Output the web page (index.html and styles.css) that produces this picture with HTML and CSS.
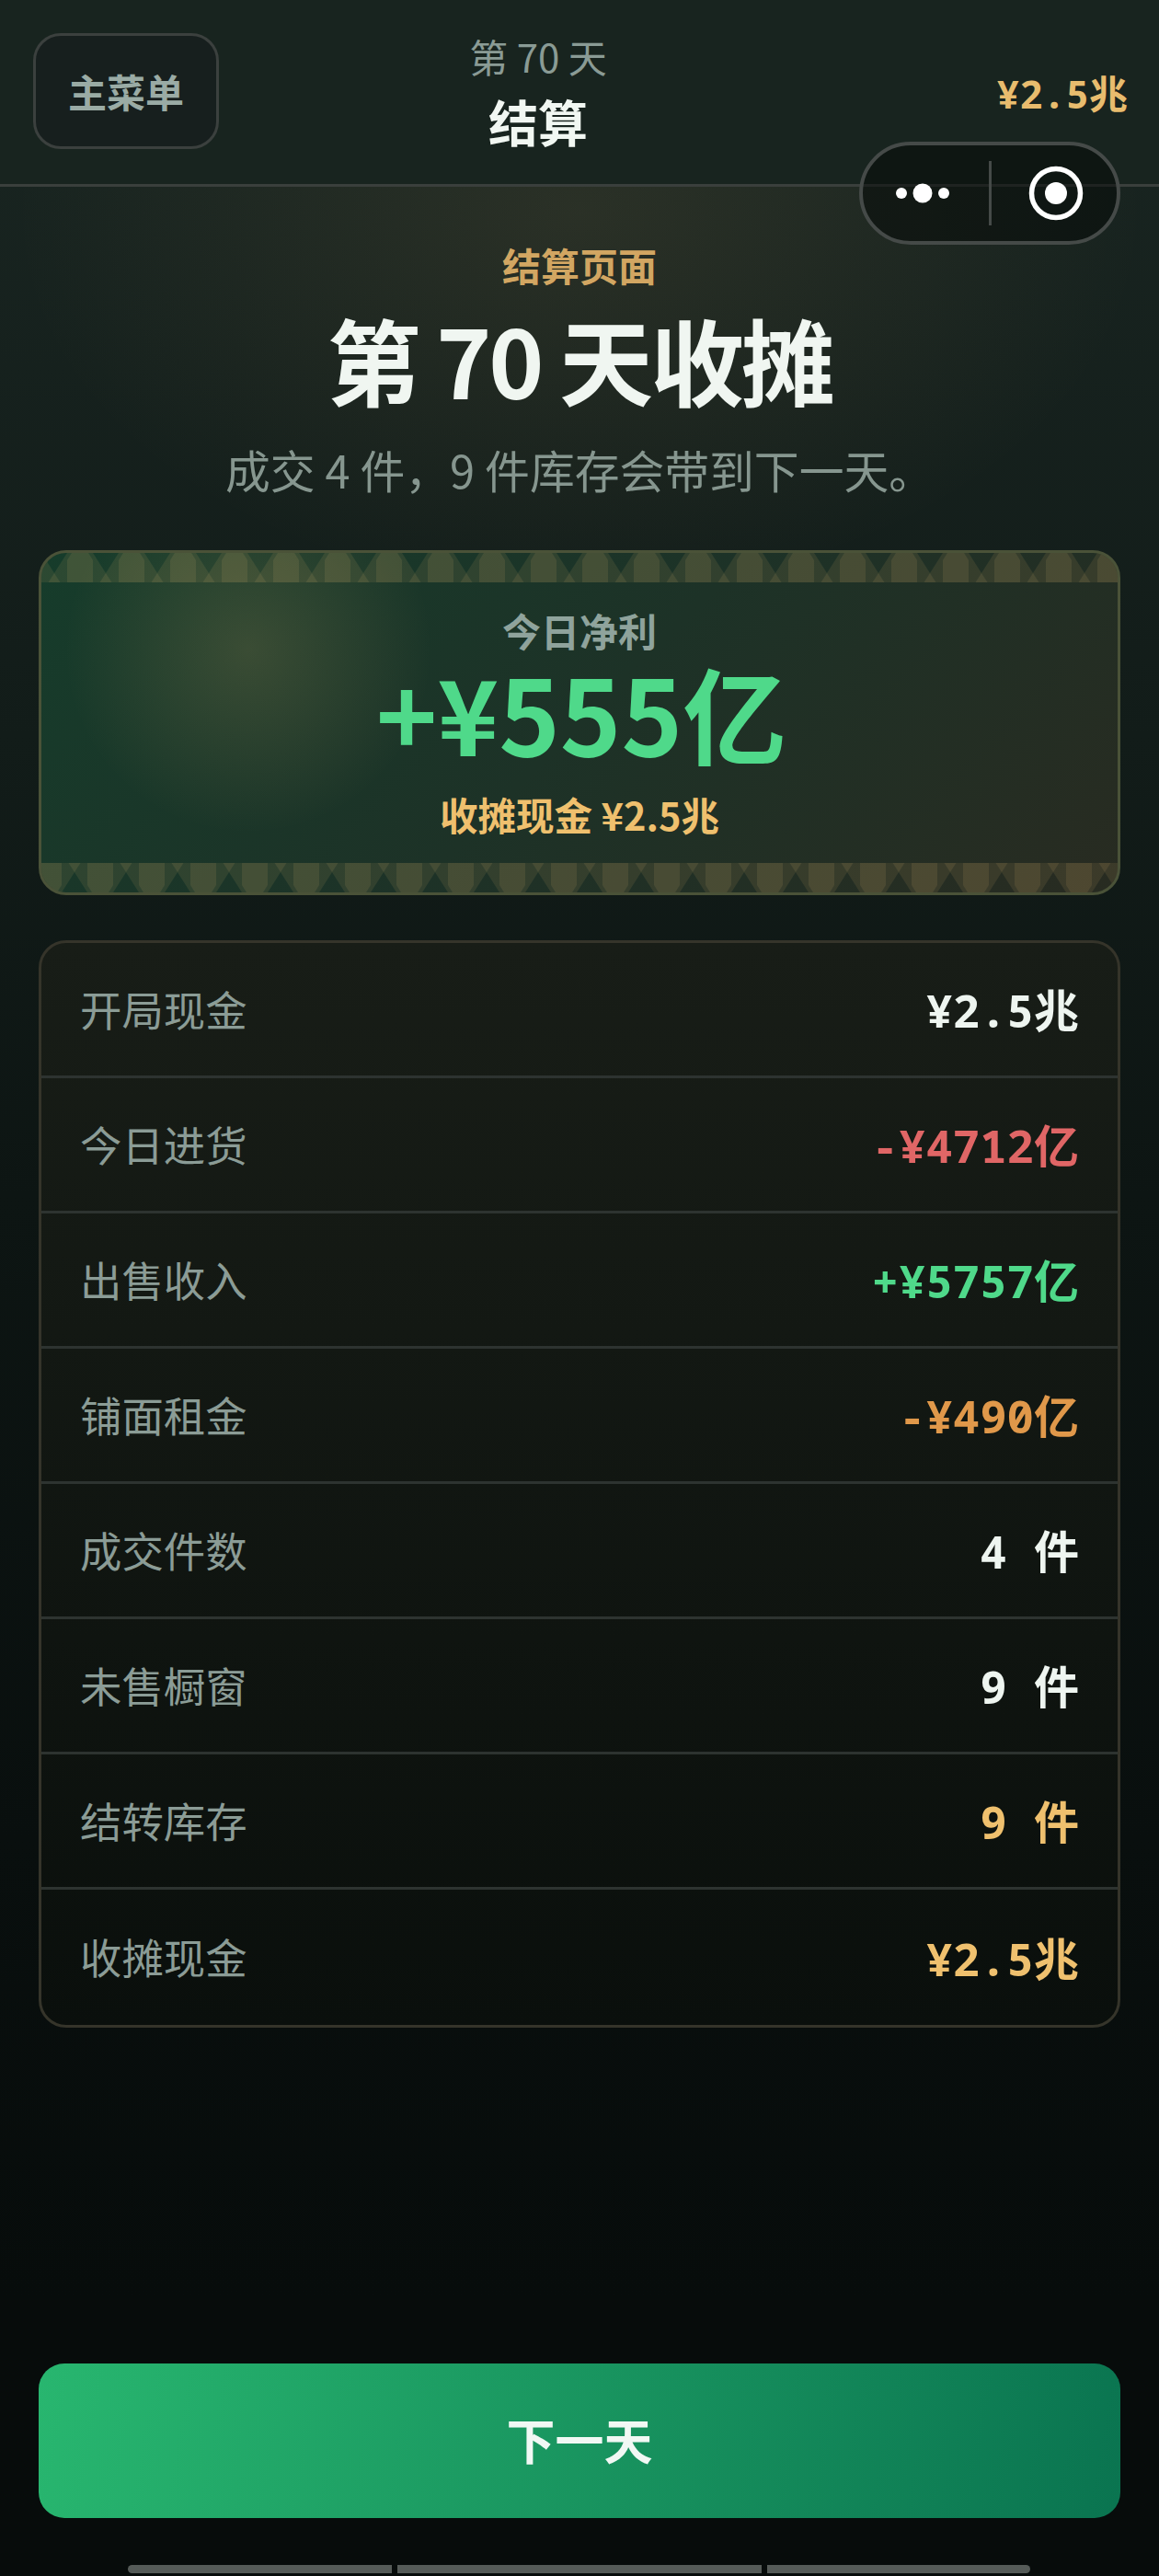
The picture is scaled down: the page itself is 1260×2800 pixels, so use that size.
FILE: index.html
```html
<!DOCTYPE html>
<html lang="zh-CN">
<head>
    <meta charset="utf-8">
    <meta name="viewport" content="width=device-width, initial-scale=1">
    <title>结算</title>
    <link rel="stylesheet" href="styles.css">
</head>
<body>
    <div class="page">
        <header class="nav">
            <div class="nav-left">
                <button class="menu-btn">主菜单</button>
            </div>
            <div class="nav-title">
                <div class="nav-day">第 70 天</div>
                <div class="nav-name">结算</div>
            </div>
            <div class="nav-cash mono">¥2.5兆</div>
            <div class="capsule">
                <svg class="capsule-more" width="62" height="24" viewBox="0 0 62 24">
                    <circle cx="8" cy="12" r="6" fill="#fff"/>
                    <circle cx="31" cy="12" r="10.5" fill="#fff"/>
                    <circle cx="54" cy="12" r="6" fill="#fff"/>
                </svg>
                <span class="capsule-line"></span>
                <svg class="capsule-close" width="60" height="60" viewBox="0 0 60 60">
                    <circle cx="30" cy="30" r="26.5" fill="none" stroke="#fff" stroke-width="5.5"/>
                    <circle cx="30" cy="30" r="12" fill="#fff"/>
                </svg>
            </div>
        </header>

        <main class="main">
            <div class="eyebrow">结算页面</div>
            <h1 class="title">第 70 天收摊</h1>
            <p class="subtitle">成交 4 件，9 件库存会带到下一天。</p>

            <section class="profit-card">
                <svg class="band" width="1170" height="32">
                    <defs>
                        <pattern id="bandTile" patternUnits="userSpaceOnUse" width="56" height="32">
                            <!-- the x cell: top triangle stays open -->
                            <polygon points="0,0 14,22 7.6,32 0,32" class="tile-mid"/>
                            <polygon points="28,0 14,22 20.4,32 28,32" class="tile-mid"/>
                            <polygon points="14,22 20.4,32 7.6,32" class="tile-gold"/>
                            <!-- the column with cut corners -->
                            <polygon points="28,0 33,0 28,8" class="tile-mid"/>
                            <polygon points="56,0 51,0 56,8" class="tile-mid"/>
                            <polygon points="33,0 51,0 56,8 56,32 28,32 28,8" class="tile-gold"/>
                        </pattern>
                    </defs>
                    <rect width="1170" height="32" fill="url(#bandTile)"/>
                </svg>
                <div class="profit-body">
                    <div class="profit-label">今日净利</div>
                    <div class="profit-value">+¥555亿</div>
                    <div class="profit-cash">收摊现金 ¥2.5兆</div>
                </div>
                <svg class="band band-flip" width="1170" height="32">
                    <rect width="1170" height="32" fill="url(#bandTile)"/>
                </svg>
            </section>

            <section class="ledger">
                <div class="row"><span class="row-label">开局现金</span><span class="row-value mono">¥2.5兆</span></div>
                <div class="row"><span class="row-label">今日进货</span><span class="row-value mono red">-¥4712亿</span></div>
                <div class="row"><span class="row-label">出售收入</span><span class="row-value mono green">+¥5757亿</span></div>
                <div class="row"><span class="row-label">铺面租金</span><span class="row-value mono orange">-¥490亿</span></div>
                <div class="row"><span class="row-label">成交件数</span><span class="row-value mono">4 件</span></div>
                <div class="row"><span class="row-label">未售橱窗</span><span class="row-value mono">9 件</span></div>
                <div class="row"><span class="row-label">结转库存</span><span class="row-value mono gold">9 件</span></div>
                <div class="row"><span class="row-label">收摊现金</span><span class="row-value mono gold">¥2.5兆</span></div>
            </section>

            <button class="next-btn">下一天</button>
        </main>

        <div class="home-bar">
            <span class="home-seg seg-a"></span>
            <span class="home-seg seg-b"></span>
            <span class="home-seg seg-c"></span>
        </div>
    </div>
</body>
</html>
```
FILE: styles.css
```css
* {
    margin: 0;
    padding: 0;
    box-sizing: border-box;
}
body {
    font-family: "Noto Sans CJK SC", "Liberation Sans", sans-serif;
    background-color: #070c0b;
    color: #eef5f0;
}
button {
    font-family: inherit;
    cursor: pointer;
}
.mono {
    font-family: "Noto Sans Mono", "DejaVu Sans Mono", "Noto Sans CJK SC", monospace;
    font-weight: 700;
}
.page {
    display: flex;
    flex-direction: column;
    width: 1260px;
    height: 2800px;
    overflow: hidden;
    background:
        radial-gradient(ellipse 620px 420px at 630px 230px, rgba(232, 184, 109, 0.09), rgba(232, 184, 109, 0) 100%),
        linear-gradient(180deg, #1a2622 0, #121c19 800px, #0d1513 1300px, #090f0e 2000px, #070c0b 2500px);
}

/* top bar */
.nav {
    position: relative;
    display: grid;
    grid-template-columns: 414px 270px 1fr;
    align-items: center;
    flex: none;
    height: 203px;
    padding: 0 34px 0 36px;
    background: #18241f;
    border-bottom: 3px solid #3a3f3c;
}
.menu-btn {
    display: block;
    width: 202px;
    height: 126px;
    margin-bottom: 3px;
    font-size: 42px;
    font-weight: 700;
    color: #9aaba5;
    background: #171f1e;
    border: 3px solid #3b403e;
    border-radius: 30px;
}
.nav-title {
    text-align: center;
    margin-top: -3px;
}
.nav-day {
    font-size: 42px;
    line-height: 60px;
    color: #8a9b95;
}
.nav-name {
    margin-top: 6px;
    font-size: 54px;
    line-height: 70px;
    font-weight: 700;
    color: #f1f7f2;
}
.nav-cash {
    justify-self: end;
    margin-bottom: 2px;
    font-size: 42px;
    color: #e8bc6e;
}
.capsule {
    position: absolute;
    top: 154px;
    right: 42px;
    display: flex;
    align-items: center;
    width: 284px;
    height: 112px;
    background: rgba(4, 8, 6, 0.5);
    border: 4px solid #454a48;
    border-radius: 56px;
}
.capsule-more {
    margin-left: 34px;
}
.capsule-line {
    width: 3px;
    height: 70px;
    margin-left: 41px;
    background: #454a48;
}
.capsule-close {
    margin-left: 40px;
}

/* content */
.main {
    display: flex;
    flex-direction: column;
    flex: 1;
    padding: 58px 42px 0;
}
.eyebrow {
    font-size: 42px;
    line-height: 54px;
    font-weight: 700;
    text-align: center;
    color: #d2a662;
}
.title {
    margin-top: 15px;
    font-size: 102px;
    line-height: 120px;
    font-weight: 700;
    letter-spacing: -3.2px;
    text-align: center;
    color: #f0f6f1;
}
.subtitle {
    margin-top: 28px;
    font-size: 48.8px;
    line-height: 64px;
    text-align: center;
    color: #86968f;
}

.profit-card {
    display: flex;
    flex-direction: column;
    flex: none;
    height: 375px;
    margin-top: 56px;
    overflow: hidden;
    border: 3px solid #4a5238;
    border-radius: 30px;
    background:
        radial-gradient(circle 200px at 225px 105px, rgba(232, 184, 109, 0.16), rgba(232, 184, 109, 0) 100%),
        linear-gradient(135deg, #163c2b 0, #1d3227 50%, #282b21 100%);
}
.band {
    display: block;
    flex: none;
}
.band-flip {
    transform: rotate(180deg);
}
.tile-mid {
    fill: rgba(232, 184, 109, 0.1);
}
.tile-gold {
    fill: rgba(232, 184, 109, 0.2);
}
.profit-body {
    flex: 1;
    text-align: center;
}
.profit-label {
    margin-top: 24px;
    font-size: 42px;
    line-height: 56px;
    font-weight: 700;
    color: #8fa39c;
}
.profit-value {
    margin-top: 10px;
    padding-left: 4px;
    font-size: 113px;
    line-height: 100px;
    font-weight: 700;
    color: #4fd98a;
}
.profit-cash {
    margin-top: 34px;
    font-size: 41.5px;
    line-height: 56px;
    font-weight: 700;
    color: #efc06e;
}

.ledger {
    flex: none;
    margin-top: 49px;
    overflow: hidden;
    border: 3px solid #35342a;
    border-radius: 30px;
    background: linear-gradient(180deg, #181d17 0, #0a0f0c 100%);
}
.row {
    display: flex;
    justify-content: space-between;
    align-items: center;
    height: 147px;
    padding: 0 42px 3px;
    border-bottom: 3px solid #2d3330;
}
.row:last-child {
    border-bottom: none;
}
.row-label {
    font-size: 45.4px;
    color: #8b9c96;
}
.row-value {
    font-size: 49px;
    color: #eef5f0;
}
.row-value.red {
    color: #e06666;
}
.row-value.green {
    color: #4fd98a;
}
.row-value.orange {
    color: #e0984a;
}
.row-value.gold {
    color: #efc06e;
}

.next-btn {
    flex: none;
    height: 168px;
    margin-top: auto;
    padding-bottom: 5px;
    font-size: 53px;
    font-weight: 700;
    color: #f1f8f4;
    background: linear-gradient(100deg, #28b66f 0, #0a7450 100%);
    border: none;
    border-radius: 28px;
}

/* bottom system bar */
.home-bar {
    display: flex;
    flex: none;
    gap: 6px;
    height: 9px;
    margin: 51px 140px 3px 139px;
}
.home-seg {
    height: 9px;
    background: #555b58;
}
.seg-a {
    flex: 287;
    border-radius: 5px 0 0 5px;
}
.seg-b {
    flex: 395;
}
.seg-c {
    flex: 286;
    border-radius: 0 5px 5px 0;
}
```
